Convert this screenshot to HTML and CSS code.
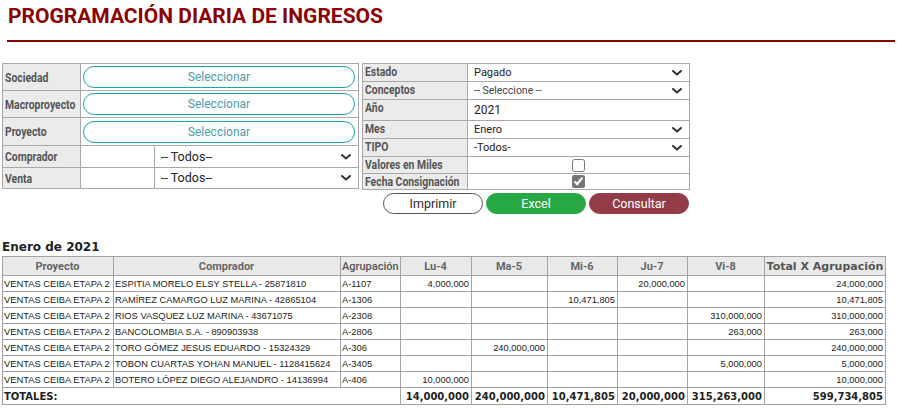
FILE: index.html
```html
<!DOCTYPE html>
<html lang="es">
<head>
<meta charset="utf-8">
<title>Programación diaria de ingresos</title>
<link rel="stylesheet" href="styles.css">
</head>
<body>
<header class="page-head">
  <h1 class="page-title">PROGRAMACIÓN DIARIA DE INGRESOS</h1>
  <div class="rule"></div>
</header>

<section class="filters">
  <table class="form-table form-left">
    <colgroup><col class="c-label"><col class="c-mid"><col class="c-end"></colgroup>
    <tr class="r-27"><td class="lbl"><span class="lt">Sociedad</span></td><td colspan="2" class="pick-cell"><button class="pick">Seleccionar</button></td></tr>
    <tr class="r-27"><td class="lbl"><span class="lt">Macroproyecto</span></td><td colspan="2" class="pick-cell"><button class="pick">Seleccionar</button></td></tr>
    <tr class="r-28"><td class="lbl"><span class="lt">Proyecto</span></td><td colspan="2" class="pick-cell"><button class="pick">Seleccionar</button></td></tr>
    <tr class="r-22"><td class="lbl"><span class="lt">Comprador</span></td><td></td><td><div class="sel sel-big"><span>-- Todos--</span><svg class="chev" viewBox="0 0 10 6" width="10" height="6"><path d="M1 1l4 3.6L9 1"/></svg></div></td></tr>
    <tr class="r-21"><td class="lbl"><span class="lt">Venta</span></td><td></td><td><div class="sel sel-big"><span>-- Todos--</span><svg class="chev" viewBox="0 0 10 6" width="10" height="6"><path d="M1 1l4 3.6L9 1"/></svg></div></td></tr>
  </table>

  <div class="right-col">
    <table class="form-table form-right">
      <colgroup><col class="c-rlabel"><col></colgroup>
      <tr class="r-18"><td class="lbl"><span class="lt">Estado</span></td><td><div class="sel"><span>Pagado</span><svg class="chev" viewBox="0 0 10 6" width="10" height="6"><path d="M1 1l4 3.6L9 1"/></svg></div></td></tr>
      <tr class="r-18"><td class="lbl"><span class="lt">Conceptos</span></td><td><div class="sel sel-muted"><span>-- Seleccione --</span><svg class="chev" viewBox="0 0 10 6" width="10" height="6"><path d="M1 1l4 3.6L9 1"/></svg></div></td></tr>
      <tr class="r-21"><td class="lbl"><span class="lt">Año</span></td><td><div class="sel sel-input"><span>2021</span></div></td></tr>
      <tr class="r-18"><td class="lbl"><span class="lt">Mes</span></td><td><div class="sel"><span>Enero</span><svg class="chev" viewBox="0 0 10 6" width="10" height="6"><path d="M1 1l4 3.6L9 1"/></svg></div></td></tr>
      <tr class="r-18"><td class="lbl"><span class="lt">TIPO</span></td><td><div class="sel"><span>-Todos-</span><svg class="chev" viewBox="0 0 10 6" width="10" height="6"><path d="M1 1l4 3.6L9 1"/></svg></div></td></tr>
      <tr class="r-17"><td class="lbl"><span class="lt">Valores en Miles</span></td><td class="chk-cell"><input type="checkbox" class="chk"></td></tr>
      <tr class="r-16"><td class="lbl"><span class="lt">Fecha Consignación</span></td><td class="chk-cell"><input type="checkbox" class="chk" checked></td></tr>
    </table>
    <div class="actions">
      <button class="btn btn-print">Imprimir</button>
      <button class="btn btn-excel">Excel</button>
      <button class="btn btn-query">Consultar</button>
    </div>
  </div>
</section>

<h2 class="period">Enero de 2021</h2>

<table class="report">
  <colgroup>
    <col style="width:111px"><col style="width:227px"><col style="width:60px"><col style="width:71px"><col style="width:76px"><col style="width:70px"><col style="width:70px"><col style="width:77px"><col style="width:121px">
  </colgroup>
  <thead>
    <tr><th>Proyecto</th><th>Comprador</th><th class="th-agr">Agrupación</th><th>Lu-4</th><th>Ma-5</th><th>Mi-6</th><th>Ju-7</th><th>Vi-8</th><th class="th-total">Total X Agrupación</th></tr>
  </thead>
  <tbody>
    <tr><td>VENTAS CEIBA ETAPA 2</td><td>ESPITIA MORELO ELSY STELLA - 25871810</td><td>A-1107</td><td class="n">4,000,000</td><td class="n"></td><td class="n"></td><td class="n">20,000,000</td><td class="n"></td><td class="n">24,000,000</td></tr>
    <tr><td>VENTAS CEIBA ETAPA 2</td><td>RAMÍREZ CAMARGO LUZ MARINA - 42865104</td><td>A-1306</td><td class="n"></td><td class="n"></td><td class="n">10,471,805</td><td class="n"></td><td class="n"></td><td class="n">10,471,805</td></tr>
    <tr><td>VENTAS CEIBA ETAPA 2</td><td>RIOS VASQUEZ LUZ MARINA - 43671075</td><td>A-2308</td><td class="n"></td><td class="n"></td><td class="n"></td><td class="n"></td><td class="n">310,000,000</td><td class="n">310,000,000</td></tr>
    <tr><td>VENTAS CEIBA ETAPA 2</td><td>BANCOLOMBIA S.A. - 890903938</td><td>A-2806</td><td class="n"></td><td class="n"></td><td class="n"></td><td class="n"></td><td class="n">263,000</td><td class="n">263,000</td></tr>
    <tr><td>VENTAS CEIBA ETAPA 2</td><td>TORO GÓMEZ JESUS EDUARDO - 15324329</td><td>A-306</td><td class="n"></td><td class="n">240,000,000</td><td class="n"></td><td class="n"></td><td class="n"></td><td class="n">240,000,000</td></tr>
    <tr><td>VENTAS CEIBA ETAPA 2</td><td>TOBON CUARTAS YOHAN MANUEL - 1128415624</td><td>A-3405</td><td class="n"></td><td class="n"></td><td class="n"></td><td class="n"></td><td class="n">5,000,000</td><td class="n">5,000,000</td></tr>
    <tr><td>VENTAS CEIBA ETAPA 2</td><td>BOTERO LÓPEZ DIEGO ALEJANDRO - 14136994</td><td>A-406</td><td class="n">10,000,000</td><td class="n"></td><td class="n"></td><td class="n"></td><td class="n"></td><td class="n">10,000,000</td></tr>
  </tbody>
  <tfoot>
    <tr><td colspan="3" class="tot-label">TOTALES:</td><td class="n">14,000,000</td><td class="n">240,000,000</td><td class="n">10,471,805</td><td class="n">20,000,000</td><td class="n">315,263,000</td><td class="n">599,734,805</td></tr>
  </tfoot>
</table>
</body>
</html>
```

FILE: styles.css
```css
* { box-sizing: border-box; }

body {
  margin: 0;
  font-family: Roboto, "Liberation Sans", sans-serif;
  color: #222;
  background: #fff;
}

/* ---------- heading ---------- */
.page-title {
  margin: 0;
  padding: 4px 0 0 8px;
  font-size: 21px;
  line-height: 25px;
  font-weight: 700;
  color: #8b0000;
}

.rule {
  height: 2px;
  margin: 11px 2px 0 7px;
  background: #8b0000;
}

/* ---------- filters ---------- */
.filters {
  display: flex;
  align-items: flex-start;
  gap: 3px;
  margin-top: 21px;
  padding-left: 2px;
}

.form-table {
  border-collapse: collapse;
  table-layout: fixed;
}

.form-table td {
  border: 1px solid #a8a8a8;
  padding: 0;
  vertical-align: middle;
}

.form-left { width: 357px; }
.form-left .c-label { width: 78px; }
.form-left .c-mid { width: 74px; }

.form-right { width: 328px; }
.form-right .c-rlabel { width: 105px; }

.r-27 { height: 27px; }
.r-28 { height: 28px; }
.r-22 { height: 22px; }
.r-21 { height: 21px; }
.r-18 { height: 18px; }
.r-17 { height: 17px; }
.r-16 { height: 16px; }

.lbl {
  background: #ebebeb;
  padding: 0 2px !important;
  font-family: Roboto, sans-serif;
  font-size: 13px;
  font-weight: 700;
  color: #555;
  white-space: nowrap;
}

/* the labels use a condensed face; Roboto is narrowed to match */
.lt {
  display: inline-block;
  transform: scaleX(0.8);
  transform-origin: left center;
}

.form-right .lbl { vertical-align: top; line-height: 15px; }

.pick-cell { padding: 0 3px 0 2px !important; }

.pick {
  display: block;
  width: 100%;
  height: 22px;
  border: 1px solid #1ba3b6;
  border-radius: 11px;
  background: #fff;
  font-family: Roboto, sans-serif;
  font-size: 12px;
  color: #4f9cab;
  padding: 0;
}

.sel {
  display: flex;
  align-items: center;
  justify-content: space-between;
  padding: 0 7px 0 6px;
  font-size: 11px;
  color: #222;
  line-height: 14px;
}

.sel-big { font-size: 12.5px; }
.sel-muted { font-size: 10.5px; color: #444; }
.sel-input { font-size: 12px; }

.chev path {
  fill: none;
  stroke: #333;
  stroke-width: 2;
  stroke-linecap: round;
  stroke-linejoin: round;
}

.chk-cell { text-align: center; line-height: 0; }

.chk {
  width: 13px;
  height: 13px;
  margin: 0;
  accent-color: #757575;
  vertical-align: middle;
}

.actions {
  display: flex;
  gap: 3px;
  margin-top: 3px;
  padding-left: 21px;
}

.btn {
  width: 100px;
  height: 21px;
  border-radius: 11px;
  font-family: Roboto, sans-serif;
  font-size: 12.5px;
  padding: 0;
  cursor: pointer;
}

.btn-print { background: #fff; border: 1px solid #555; color: #2a2a2a; }
.btn-excel { background: #28a745; border: 1px solid #28a745; color: #fff; }
.btn-query { background: #933c47; border: 1px solid #933c47; color: #fff; }

/* ---------- report ---------- */
.period {
  margin: 26px 0 2px 2px;
  font-family: "DejaVu Sans", Verdana, sans-serif;
  font-size: 12px;
  line-height: 14px;
  font-weight: 700;
  color: #222;
}

.report {
  margin-left: 2px;
  width: 884px;
  border-collapse: collapse;
  table-layout: fixed;
  font-family: "Liberation Sans", Arial, sans-serif;
  font-size: 9.33px;
  color: #222;
}

.report th,
.report td {
  border: 1px solid #a3a3a3;
  padding: 0 2px 0 1px;
  white-space: nowrap;
  overflow: hidden;
}

.report th {
  height: 19px;
  background: #e9e9e9;
  font-family: Roboto, sans-serif;
  font-size: 11px;
  font-weight: 700;
  color: #666;
}

.report th.th-agr { font-weight: 500; color: #555; }

.report th.th-total {
  font-family: "DejaVu Sans", Verdana, sans-serif;
  font-size: 11px;
  color: #555;
  padding: 0 1px;
}

.report tbody td { height: 16px; }

.report .n { text-align: right; }

.report tfoot td {
  height: 17px;
  font-family: "DejaVu Sans", Verdana, sans-serif;
  font-size: 10px;
  font-weight: 700;
  color: #222;
}
```
